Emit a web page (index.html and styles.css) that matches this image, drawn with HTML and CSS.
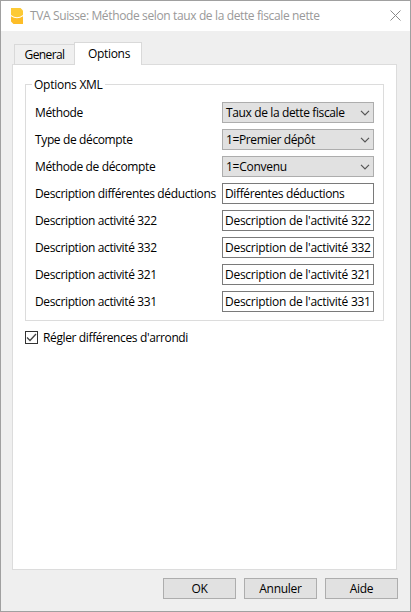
FILE: index.html
```html
<!DOCTYPE html>
<html lang="fr">
<head>
<meta charset="utf-8">
<title>TVA Suisse</title>
<link rel="stylesheet" href="styles.css">
</head>
<body>
<div class="window">
  <header class="titlebar">
    <svg class="logo" width="12" height="16" viewBox="0 0 12 16"><path d="M0 0H9.500L12 2.500V7Q6 11.500 0 7Z" fill="#fdca35"/><path d="M0 8.200Q6 12.500 12 8.200V16H2.500L0 13.500Z" fill="#fdbd28"/></svg>
    <span class="title">TVA Suisse: Méthode selon taux de la dette fiscale nette</span>
    <svg class="close" width="11" height="11" viewBox="0 0 11 11"><path d="M.5.5l10 10M10.500.5l-10 10" stroke="#8a8a8a" fill="none"/></svg>
  </header>
  <nav class="tabs"><div class="tab">General</div><div class="tab active">Options</div></nav>
  <main class="panel">
    <section class="group">
      <h2 class="legend"><span>Options XML</span></h2>
      <div class="row"><label>Méthode</label><div class="combo"><span>Taux de la dette fiscale</span><svg width="10" height="6" viewBox="0 0 10 6"><path d="M1 .8l4 4 4-4" fill="none" stroke="#555" stroke-width="1.200"/></svg></div></div>
      <div class="row"><label>Type de décompte</label><div class="combo"><span>1=Premier dépôt</span><svg width="10" height="6" viewBox="0 0 10 6"><path d="M1 .8l4 4 4-4" fill="none" stroke="#555" stroke-width="1.200"/></svg></div></div>
      <div class="row"><label>Méthode de décompte</label><div class="combo"><span class="normal">1=Convenu</span><svg width="10" height="6" viewBox="0 0 10 6"><path d="M1 .8l4 4 4-4" fill="none" stroke="#555" stroke-width="1.200"/></svg></div></div>
      <div class="row"><label>Description différentes déductions</label><div class="field"><span>Différentes déductions</span></div></div>
      <div class="row"><label>Description activité 322</label><div class="field"><span class="normal">Description de l'activité 322</span></div></div>
      <div class="row"><label>Description activité 332</label><div class="field"><span class="normal">Description de l'activité 332</span></div></div>
      <div class="row"><label>Description activité 321</label><div class="field"><span class="normal">Description de l'activité 321</span></div></div>
      <div class="row"><label>Description activité 331</label><div class="field"><span class="normal">Description de l'activité 331</span></div></div>
    </section>
    <div class="check"><span class="box"><svg width="11" height="11" viewBox="0 0 11 11"><path d="M1 5.500l3 3 6-6.500" fill="none" stroke="#444" stroke-width="1.300"/></svg></span><span class="check-label">Régler différences d'arrondi</span></div>
  </main>
  <footer class="buttons"><div class="button">OK</div><div class="button">Annuler</div><div class="button">Aide</div></footer>
</div>
</body>
</html>
```
FILE: styles.css
```css
* { box-sizing: border-box; }
body { margin: 0; width: 411px; height: 612px; overflow: hidden; font: 12px/16px "Open Sans", "Noto Sans", sans-serif; letter-spacing: -0.37px; color: #000; white-space: nowrap; }
.window { width: 411px; height: 612px; border: 1px solid #a0a0a0; background: #efefef; display: flex; flex-direction: column; }
.titlebar { height: 30px; flex: none; background: #fff; display: flex; align-items: center; padding: 0 10px; color: #999; }
.logo { margin-right: 7px; }
.close { margin-left: auto; margin-right: -1px; margin-top: -2px; }
.tabs { display: flex; align-items: flex-end; height: 34px; padding-left: 13px; flex: none; margin-bottom: -1px; z-index: 1; }
.tab { width: 60px; height: 21px; border: 1px solid #d9d9d9; border-right: 0; background: #f0f0f0; text-align: center; line-height: 20px; letter-spacing: -0.6px; }
.tab.active { width: 68px; height: 23px; background: #fff; border-right: 1px solid #d9d9d9; border-bottom: 0; line-height: 22px; padding-left: 2px; letter-spacing: -0.3px; }
.panel { width: 385px; height: 506px; flex: none; margin-left: 11px; border: 1px solid #dcdcdc; background: #fff; padding: 19px 12px; }
.group { width: 359px; height: 237px; border: 1px solid #dcdcdc; }
.legend { margin: -8px 0 9px 6px; height: 16px; font: inherit; letter-spacing: -0.25px; }
.legend span { background: #fff; padding: 0 2px; }
.row { display: flex; height: 21px; margin: 0 9px 6px; justify-content: space-between; line-height: 22px; }
.combo, .field { width: 152px; height: 21px; border: 1px solid #adadad; background: #e1e1e1; display: flex; align-items: center; justify-content: space-between; padding: 0 3px; line-height: 19px; }
.field { border-color: #7a7a7a; background: #fff; padding: 0 2px; }
.normal { letter-spacing: -0.27px; }
.check { display: flex; align-items: center; height: 17px; margin-top: 8px; }
.box { width: 13px; height: 13px; border: 1px solid #333; display: flex; margin-right: 5px; }
.check-label { line-height: 17px; }
.buttons { display: flex; gap: 8px; justify-content: flex-end; padding: 8px 12px 0 0; letter-spacing: -0.27px; }
.button { width: 73px; height: 21px; border: 1px solid #adadad; background: #e1e1e1; text-align: center; line-height: 19px; }
```
